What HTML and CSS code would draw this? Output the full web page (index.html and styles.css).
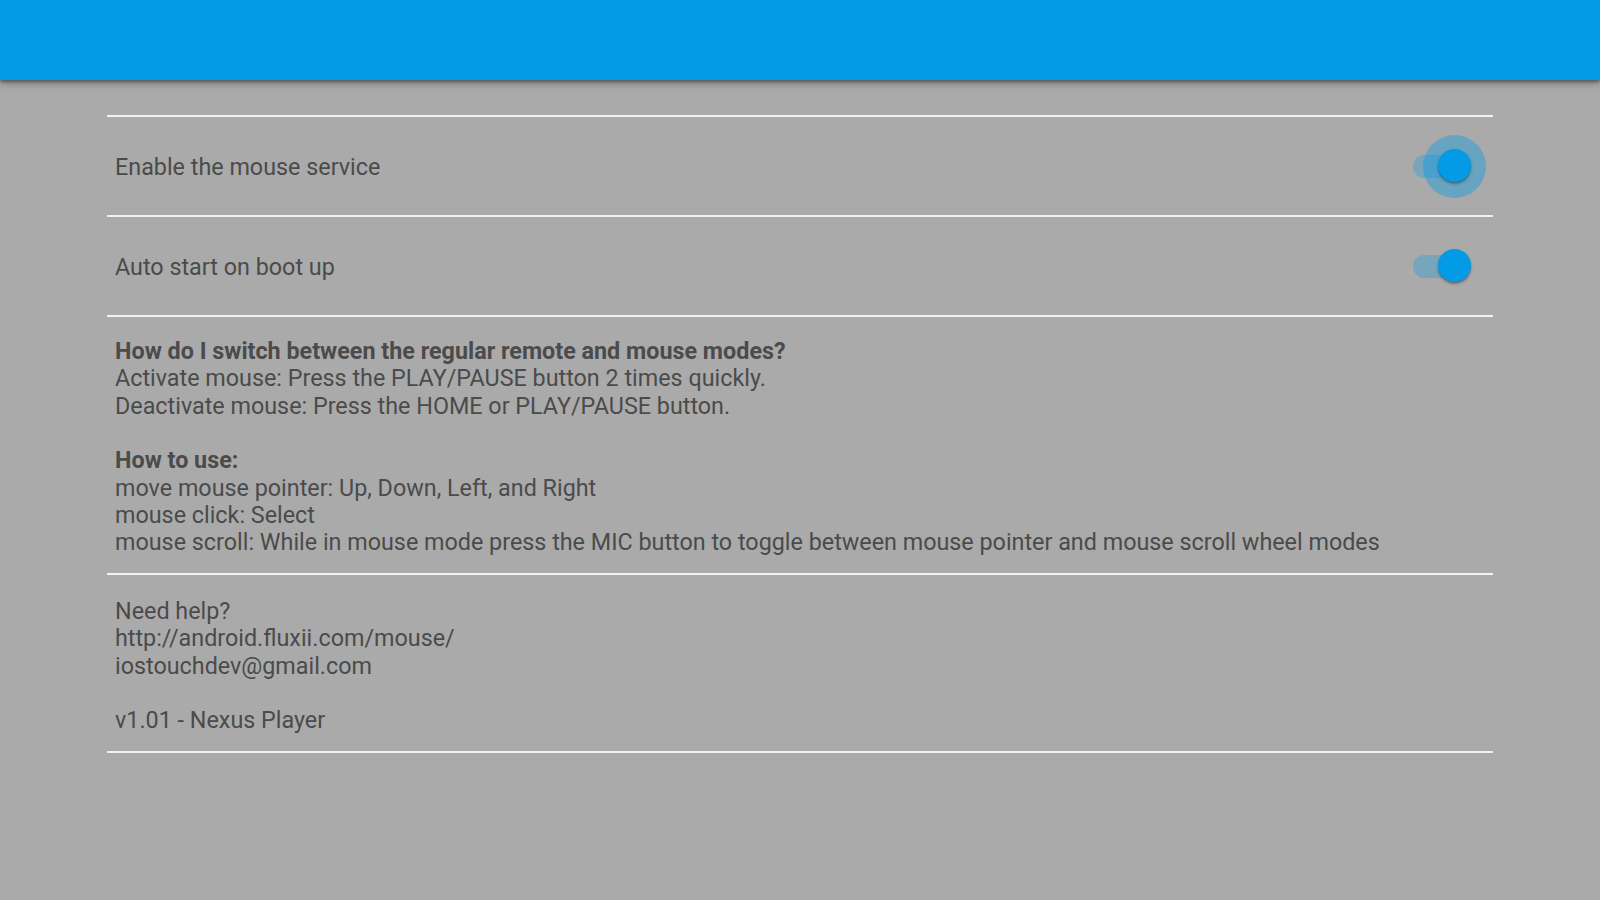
FILE: index.html
```html
<!DOCTYPE html>
<html lang="en">
<head>
<meta charset="utf-8">
<title>Mouse service settings</title>
<link rel="stylesheet" href="styles.css">
</head>
<body>
<header class="appbar"></header>
<main class="content">
  <div class="divider"></div>
  <div class="row">
    <span class="row-label">Enable the mouse service</span>
    <div class="switch switch-focused">
      <div class="switch-track"></div>
      <div class="switch-halo"></div>
      <div class="switch-thumb"></div>
    </div>
  </div>
  <div class="divider"></div>
  <div class="row">
    <span class="row-label">Auto start on boot up</span>
    <div class="switch">
      <div class="switch-track"></div>
      <div class="switch-thumb"></div>
    </div>
  </div>
  <div class="divider"></div>
  <section class="info info-help">
    <p class="line bold">How do I switch between the regular remote and mouse modes?</p>
    <p class="line">Activate mouse: Press the PLAY/PAUSE button 2 times quickly.</p>
    <p class="line">Deactivate mouse: Press the HOME or PLAY/PAUSE button.</p>
    <p class="line blank">&nbsp;</p>
    <p class="line bold">How to use:</p>
    <p class="line">move mouse pointer: Up, Down, Left, and Right</p>
    <p class="line">mouse click: Select</p>
    <p class="line">mouse scroll: While in mouse mode press the MIC button to toggle between mouse pointer and mouse scroll wheel modes</p>
  </section>
  <div class="divider"></div>
  <section class="info info-footer">
    <p class="line">Need help?</p>
    <p class="line">http://android.fluxii.com/mouse/</p>
    <p class="line">iostouchdev@gmail.com</p>
    <p class="line blank">&nbsp;</p>
    <p class="line">v1.01 - Nexus Player</p>
  </section>
  <div class="divider"></div>
</main>
</body>
</html>
```

FILE: styles.css
```css
html, body {
  margin: 0;
  padding: 0;
}

body {
  width: 1600px;
  height: 900px;
  overflow: hidden;
  background: #aaaaaa;
  font-family: Roboto, "Noto Sans", "Liberation Sans", sans-serif;
  color: #4b4b4b;
}

.appbar {
  height: 80px;
  background: #039be5;
  box-shadow: 0 2px 3px rgba(0, 0, 0, 0.35), 0 4px 8px rgba(0, 0, 0, 0.25);
  position: relative;
  z-index: 1;
}

.content {
  margin: 35px 107px 0;
  display: flex;
  flex-direction: column;
}

.divider {
  height: 2px;
  background: #f1f1f1;
}

.row {
  height: 98px;
  display: flex;
  align-items: center;
  justify-content: space-between;
  padding: 0 22px 0 8px;
}

.row-label {
  font-size: 23.33px;
  line-height: 27.33px;
  margin-top: 4px;
}

.switch {
  position: relative;
  width: 58px;
  height: 34px;
}

.switch-track {
  position: absolute;
  left: 0;
  top: 6px;
  width: 56px;
  height: 23px;
  border-radius: 12px;
  background: rgba(3, 155, 229, 0.3);
}

.switch-halo {
  position: absolute;
  left: 10px;
  top: -14px;
  width: 63px;
  height: 63px;
  border-radius: 50%;
  background: rgba(3, 155, 229, 0.4);
}

.switch-thumb {
  position: absolute;
  right: 0;
  top: 0;
  width: 33px;
  height: 33px;
  border-radius: 50%;
  background: #039be5;
  box-shadow: 0 2px 3px rgba(0, 0, 0, 0.3), 0 1px 1px rgba(0, 0, 0, 0.15);
}

.info {
  display: flex;
  flex-direction: column;
  padding: 0 8px;
}

.info-help {
  height: 256px;
  box-sizing: border-box;
  padding-top: 21px;
}

.info-footer {
  height: 176px;
  box-sizing: border-box;
  padding-top: 23px;
}

.line {
  margin: 0;
  font-size: 23.33px;
  line-height: 27.33px;
  white-space: nowrap;
}

.bold {
  font-weight: 700;
}
```
